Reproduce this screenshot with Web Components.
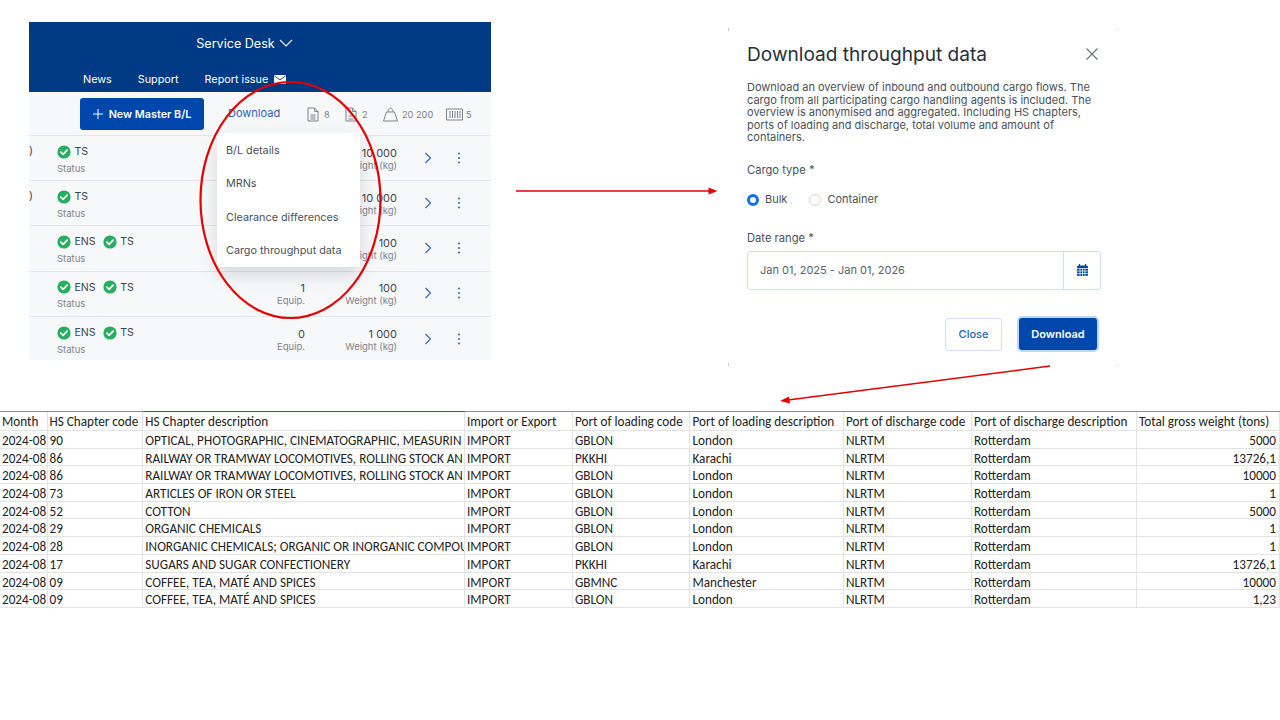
<!DOCTYPE html>
<html lang="en">
<head>
<meta charset="utf-8">
<title>Download throughput data</title>
<style>
  html, body { margin: 0; background: #fff; }
  body { width: 1280px; height: 720px; overflow: hidden; font-family: Inter, "Liberation Sans", sans-serif; }
</style>
</head>
<body>
<slide-page>
  <service-panel slot="panel"></service-panel>
  <throughput-modal slot="modal"></throughput-modal>
  <sheet-table slot="sheet"></sheet-table>
  <slide-annotations slot="marks"></slide-annotations>
</slide-page>

<script>
const CHECK = `<svg width="14" height="14" viewBox="0 0 14 14"><circle cx="7" cy="7" r="6.6" fill="#27ae60"/><path d="M3.9 7.2l2.2 2.1 4-4.2" fill="none" stroke="#fff" stroke-width="1.7" stroke-linecap="round" stroke-linejoin="round"/></svg>`;

class SlidePage extends HTMLElement {
  constructor() {
    super();
    this.attachShadow({ mode: "open" });
    this.shadowRoot.innerHTML = `
      <style>
        :host { display: block; position: relative; width: 1280px; height: 720px; }
        .top { display: flex; align-items: flex-start; padding: 22px 0 0 29px; }
        .modal { margin: 6px 0 0 237px; }
        .sheet { margin-top: 45px; }
      </style>
      <div class="top">
        <slot name="panel"></slot>
        <div class="modal"><slot name="modal"></slot></div>
      </div>
      <div class="sheet"><slot name="sheet"></slot></div>
      <slot name="marks"></slot>
    `;
  }
}

class ServicePanel extends HTMLElement {
  constructor() {
    super();
    this.attachShadow({ mode: "open" });
    this.shadowRoot.innerHTML = `
      <style>
        :host { display: block; position: relative; width: 462px; height: 338px; overflow: hidden; background: #f7f8fa; color: #3f4650; font-size: 11px; }
        header { height: 70px; background: #003a84; color: #fff; display: flex; flex-direction: column; }
        .desk { display: flex; justify-content: center; align-items: center; gap: 4px; height: 42px; font-size: 12.600px; padding-right: 31px; }
        nav { display: flex; gap: 26px; padding: 9px 0 0 54px; font-size: 10.800px; align-items: center; }
        nav span { display: flex; align-items: center; gap: 6px; }
        .tools { height: 44px; box-sizing: border-box; padding-top: 1px; display: flex; align-items: center; border-bottom: 1px solid #e3e6ea; }
        .new { margin-left: 51px; width: 124px; height: 32px; box-sizing: border-box; background: #0047ab; color: #fff; border-radius: 3px; display: flex; align-items: center; justify-content: center; gap: 6px; font-weight: 600; font-size: 10.800px; }
        .dl { margin-left: 24px; color: #2a62b8; width: 53px; position: relative; top: -1px; }
        .counts { display: flex; margin-left: 26px; align-items: center; color: #7b838d; font-size: 9.200px; }
        .counts span { display: flex; align-items: center; gap: 5px; }
        .counts .a { width: 38px; }
        .counts .b { width: 63px; gap: 4px; }
        .counts .c { gap: 3px; }
        .menu { position: absolute; left: 188px; top: 111px; width: 143px; height: 134px; background: #fff; border-radius: 3px; box-shadow: 0 8px 18px rgba(40, 50, 70, .16); display: flex; flex-direction: column; padding: 1px 9px 0; box-sizing: border-box; justify-content: space-around; color: #4a515b; font-size: 10.800px; z-index: 2; }
      </style>
      <header>
        <div class="desk">Service Desk
          <svg width="14" height="8" viewBox="0 0 14 8"><path d="M1 1l6 6 6-6" fill="none" stroke="#fff" stroke-width="1.1"/></svg>
        </div>
        <nav>
          <span>News</span><span>Support</span>
          <span>Report issue
            <svg width="12" height="9" viewBox="0 0 12 9"><rect width="12" height="9" rx="1" fill="#fff"/><path d="M.5 1l5.500 4 5.500-4" fill="none" stroke="#003a84" stroke-width=".9"/></svg>
          </span>
        </nav>
      </header>
      <div class="tools">
        <div class="new">
          <svg width="10" height="10" viewBox="0 0 10 10"><path d="M5 0v10M0 5h10" stroke="#fff" stroke-width="1"/></svg>
          New Master B/L
        </div>
        <div class="dl">Download</div>
        <div class="counts">
          <span class="a"><svg width="12" height="15" viewBox="0 0 12 15" fill="none" stroke="#7b838d"><path d="M1 1h6.500L11 4.500V14H1zM7.500 1v3.500H11M3.500 8h5M3.500 10h5M3.500 12h5"/></svg>8</span>
          <span class="a"><svg width="12" height="15" viewBox="0 0 12 15" fill="none" stroke="#7b838d"><path d="M1 1h6.500L11 4.500V14H1zM7.500 1v3.500H11M3.500 9h5M3.500 12h5"/></svg>2</span>
          <span class="b"><svg width="15" height="16" viewBox="0 0 15 16" fill="none" stroke="#7b838d"><path d="M3.500 6h8l3 9H.5zM5 6C5 1 10 1 10 6"/></svg>20 200</span>
          <span class="c"><svg width="17" height="13" viewBox="0 0 17 13" fill="none" stroke="#7b838d"><path d="M.5 1h16v11H.5zM4 3v7M6.500 3v7M9 3v7M11.500 3v7M14 3v7"/></svg>5</span>
        </div>
      </div>
      <cargo-row stub=")" status="TS" weight="10 000"></cargo-row>
      <cargo-row stub=")" status="TS" weight="10 000"></cargo-row>
      <cargo-row status="ENS,TS" weight="100"></cargo-row>
      <cargo-row status="ENS,TS" equip="1" weight="100"></cargo-row>
      <cargo-row status="ENS,TS" equip="0" weight="1 000" last></cargo-row>
      <div class="menu"><span>B/L details</span><span>MRNs</span><span>Clearance differences</span><span>Cargo throughput data</span></div>
    `;
  }
}

class CargoRow extends HTMLElement {
  connectedCallback() {
    if (this.shadowRoot) return;
    this.attachShadow({ mode: "open" });
    const statuses = this.getAttribute("status").split(",");
    const equip = this.getAttribute("equip");
    this.shadowRoot.innerHTML = `
      <style>
        :host { display: grid; grid-template-columns: 28px 1fr 92px 92px 47px 30px 17px; align-items: center; height: 45.200px; box-sizing: border-box; border-bottom: 1px solid #e3e6ea; color: #3f4650; font-size: 11px; }
        :host([last]) { border-bottom: 0; }
        .stub { color: #3f4650; justify-self: start; margin-top: -16px; }
        .status { display: flex; flex-direction: column; gap: 4px; margin-top: 2px; }
        .flags { display: flex; gap: 7px; font-size: 10.600px; }
        .flags span { display: flex; align-items: center; gap: 3.500px; }
        small { font-size: 9.500px; color: #7b838d; }
        .num { text-align: right; display: flex; flex-direction: column; gap: 0; }
        .act { display: flex; justify-content: center; margin-top: -1px; }
        .more { justify-content: flex-end; padding-right: 12px; }
      </style>
      <div class="stub">${this.getAttribute("stub") || ""}</div>
      <div class="status">
        <div class="flags">${statuses.map((s) => `<span>${CHECK}${s}</span>`).join("")}</div>
        <small>Status</small>
      </div>
      <div class="num">${equip ? `<div>${equip}</div><small>Equip.</small>` : ""}</div>
      <div class="num"><div>${this.getAttribute("weight")}</div><small>Weight (kg)</small></div>
      <div class="act more"><svg width="8" height="12" viewBox="0 0 8 12"><path d="M1.500 1l5 5-5 5" fill="none" stroke="#2a62b8" stroke-width="1.100"/></svg></div>
      <div class="act"><svg width="4" height="12" viewBox="0 0 4 12" fill="#2a62b8"><circle cx="2" cy="1.500" r="1"/><circle cx="2" cy="6" r="1"/><circle cx="2" cy="10.500" r="1"/></svg></div>
      <div></div>
    `;
  }
}

class ThroughputModal extends HTMLElement {
  constructor() {
    super();
    this.attachShadow({ mode: "open" });
    this.shadowRoot.innerHTML = `
      <style>
        :host { display: block; width: 390px; height: 338px; box-sizing: border-box; padding: 15px 18px 0 19px; color: #4a515b; font-size: 11px;
          background:
            linear-gradient(#c4c4c4, #c4c4c4) 0 0 / 1px 3px no-repeat,
            linear-gradient(#c4c4c4, #c4c4c4) 0 100% / 1px 3px no-repeat,
            linear-gradient(#e4e4e4, #e4e4e4) 100% 0 / 1px 2px no-repeat,
            linear-gradient(#e4e4e4, #e4e4e4) 100% 100% / 1px 2px no-repeat; }
        .head { display: flex; justify-content: space-between; align-items: center; height: 22px; padding-right: 2px; }
        h2 { margin: 0; font-weight: 400; font-size: 19.100px; color: #27303a; white-space: nowrap; }
        p { margin: 16px 0 0; line-height: 12.500px; width: 352px; }
        label { display: block; font-size: 11.200px; }
        .type { margin-top: 19px; }
        .radios { display: flex; margin-top: 15px; height: 14px; align-items: center; }
        .radio { width: 12px; height: 12px; border-radius: 50%; box-sizing: border-box; margin-right: 6px; position: relative; top: 1px; }
        .on { border: 3.500px solid #0d6efd; }
        .off { border: 1px solid #d5d9de; margin-left: 22px; }
        .date { margin-top: 25px; }
        .field { display: flex; margin-top: 6px; width: 354px; height: 39px; box-sizing: border-box; border: 1px solid #cfe0f6; border-radius: 3px; align-items: center; }
        .field span { flex: 1; padding-left: 12px; font-size: 11px; color: #5a616b; }
        .field div { width: 36px; height: 100%; border-left: 1px solid #cfe0f6; display: flex; align-items: center; justify-content: center; }
        .actions { display: flex; justify-content: flex-end; gap: 17px; margin: 28px 3px 0 0; align-items: center; }
        .btn { display: flex; align-items: center; justify-content: center; height: 33px; box-sizing: border-box; border-radius: 3px; font-size: 11px; font-weight: 600; }
        .close { width: 57px; color: #2a62b8; border: 1px solid #cfe0f6; font-weight: 500; }
        .go { width: 78px; height: 32px; background: #0047ab; color: #fff; box-shadow: 0 0 0 2px #bcd6f7; }
      </style>
      <div class="head">
        <h2>Download throughput data</h2>
        <svg width="12" height="12" viewBox="0 0 12 12"><path d="M.500.500l11 11M11.500.500l-11 11" stroke="#6b727b" stroke-width="1.100"/></svg>
      </div>
      <p>Download an overview of inbound and outbound cargo flows. The cargo from all participating cargo handling agents is included. The overview is anonymised and aggregated. Including HS chapters, ports of loading and discharge, total volume and amount of containers.</p>
      <label class="type">Cargo type *</label>
      <div class="radios">
        <i class="radio on"></i><span>Bulk</span>
        <i class="radio off"></i><span>Container</span>
      </div>
      <label class="date">Date range *</label>
      <div class="field">
        <span>Jan 01, 2025 - Jan 01, 2026</span>
        <div><svg width="11" height="12" viewBox="0 0 11 12"><path d="M2.500 0v2M8.500 0v2" stroke="#0047ab" stroke-width="1.200"/><rect y="1.500" width="11" height="10.500" rx="1.500" fill="#0047ab"/><path d="M0 4.500h11M0 7h11M0 9.500h11M3 4.500V12M5.500 4.500V12M8 4.500V12" stroke="#fff" stroke-width=".7"/></svg></div>
      </div>
      <div class="actions">
        <div class="btn close">Close</div>
        <div class="btn go">Download</div>
      </div>
    `;
  }
}

const SHEET_HEAD = ["Month", "HS Chapter code", "HS Chapter description", "Import or Export", "Port of loading code", "Port of loading description", "Port of discharge code", "Port of discharge description", "Total gross weight (tons)"];
const SHEET_ROWS = [
  ["90", "OPTICAL, PHOTOGRAPHIC, CINEMATOGRAPHIC, MEASURIN", "GBLON", "London", "5000"],
  ["86", "RAILWAY OR TRAMWAY LOCOMOTIVES, ROLLING STOCK AN", "PKKHI", "Karachi", "13726,1"],
  ["86", "RAILWAY OR TRAMWAY LOCOMOTIVES, ROLLING STOCK AN", "GBLON", "London", "10000"],
  ["73", "ARTICLES OF IRON OR STEEL", "GBLON", "London", "1"],
  ["52", "COTTON", "GBLON", "London", "5000"],
  ["29", "ORGANIC CHEMICALS", "GBLON", "London", "1"],
  ["28", "INORGANIC CHEMICALS; ORGANIC OR INORGANIC COMPOU", "GBLON", "London", "1"],
  ["17", "SUGARS AND SUGAR CONFECTIONERY", "PKKHI", "Karachi", "13726,1"],
  ["09", "COFFEE, TEA, MATÉ AND SPICES", "GBMNC", "Manchester", "10000"],
  ["09", "COFFEE, TEA, MATÉ AND SPICES", "GBLON", "London", "1,23"],
];

class SheetTable extends HTMLElement {
  constructor() {
    super();
    this.attachShadow({ mode: "open" });
    const cell = (t, cls = "") => `<div class="c ${cls}">${t}</div>`;
    const rows = SHEET_ROWS.map(([ch, desc, code, port, w]) =>
      cell("2024-08") + cell(ch) + cell(desc) + cell("IMPORT") + cell(code) + cell(port) + cell("NLRTM") + cell("Rotterdam") + cell(w, "r")
    ).join("");
    this.shadowRoot.innerHTML = `
      <style>
        :host { display: block; width: 1280px; background: linear-gradient(#217346, #217346) 143px 0 / 322px 1px no-repeat, linear-gradient(#8f8f8f, #8f8f8f) 0 0 / 100% 1px no-repeat; }
        .grid { display: grid; padding-top: 1px; grid-template-columns: 47.500px 95.800px 321.700px 108px 117.500px 153.500px 128px 165px 143px; grid-template-rows: 19px repeat(10, 17.700px); font-family: Carlito, Lato, "Liberation Sans", sans-serif; font-size: 13.200px; color: #222; }
        .c { box-sizing: border-box; padding: 2px 0 0 2px; overflow: hidden; white-space: nowrap; border-right: 1px solid #e3e3e3; border-bottom: 1px solid #e3e3e3; line-height: 15px; }
        .c:nth-child(-n+9) { padding-top: 1px; line-height: 17px; }
        .r { text-align: right; padding-right: 3px; }
      </style>
      <div class="grid">${SHEET_HEAD.map((h) => cell(h)).join("")}${rows}</div>
    `;
  }
}

class SlideAnnotations extends HTMLElement {
  constructor() {
    super();
    this.attachShadow({ mode: "open" });
    this.shadowRoot.innerHTML = `
      <style>
        :host { position: absolute; inset: 0; pointer-events: none; z-index: 5; }
      </style>
      <svg width="1280" height="720" viewBox="0 0 1280 720" fill="none" stroke="#e60000">
        <ellipse cx="290.500" cy="200" rx="90" ry="118" stroke-width="2.200"/>
        <path d="M516 191H710" stroke-width="1.500"/>
        <path d="M717.500 191l-9-3.500v7z" fill="#e60000" stroke="none"/>
        <path d="M1050 366L788 400" stroke-width="1.500"/>
        <path d="M780 401l9-4.500 1 7z" fill="#e60000" stroke="none"/>
      </svg>
    `;
  }
}

customElements.define("slide-page", SlidePage);
customElements.define("service-panel", ServicePanel);
customElements.define("cargo-row", CargoRow);
customElements.define("throughput-modal", ThroughputModal);
customElements.define("sheet-table", SheetTable);
customElements.define("slide-annotations", SlideAnnotations);
</script>
</body>
</html>
